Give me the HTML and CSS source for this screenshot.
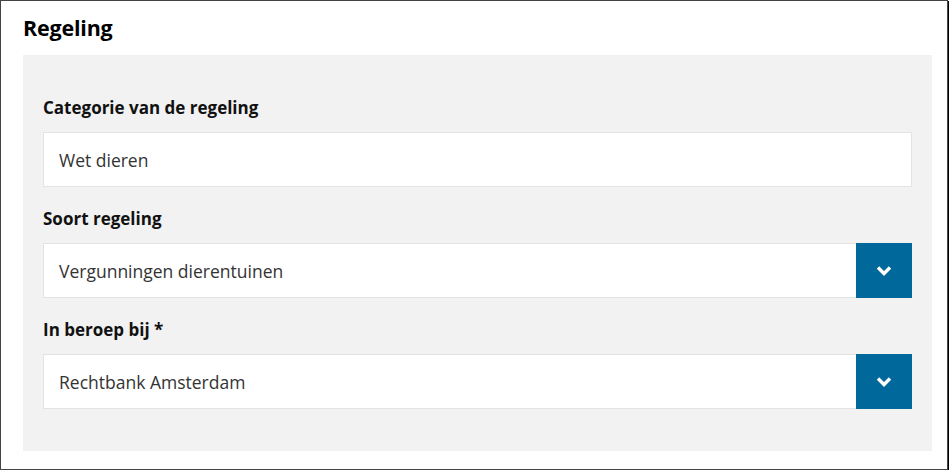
FILE: index.html
```html
<!DOCTYPE html>
<html lang="nl">
<head>
  <meta charset="UTF-8" />
  <title>Regeling</title>
  <link rel="stylesheet" href="styles.css">
</head>
<body>
  <div class="frame">
    <h2 class="title">Regeling</h2>
    <div class="panel">
      <div class="field">
        <label class="label">Categorie van de regeling</label>
        <div class="input">Wet dieren</div>
      </div>
      <div class="field">
        <label class="label">Soort regeling</label>
        <div class="select">
          <span class="value">Vergunningen dierentuinen</span>
          <span class="toggle">
            <svg width="16" height="11" viewBox="0 0 16 11"><path d="M2 2.5l6 6 6-6" fill="none" stroke="#fff" stroke-width="3.4"/></svg>
          </span>
        </div>
      </div>
      <div class="field">
        <label class="label">In beroep bij *</label>
        <div class="select">
          <span class="value">Rechtbank Amsterdam</span>
          <span class="toggle">
            <svg width="16" height="11" viewBox="0 0 16 11"><path d="M2 2.5l6 6 6-6" fill="none" stroke="#fff" stroke-width="3.4"/></svg>
          </span>
        </div>
      </div>
    </div>
  </div>
</body>
</html>
```

FILE: styles.css
```css
body {
  margin: 0;
  background: #fff;
  font-family: 'Open Sans', sans-serif;
  color: #000;
}
.frame {
  box-sizing: border-box;
  width: 948px;
  height: 470px;
  border: 1px solid #444;
  box-shadow: 1px 1px 0 #000;
  padding: 0 15px 0 22px;
}
.title {
  font-size: 21.5px;
  font-weight: bold;
  margin: 0;
  padding: 12px 0 0 0;
  height: 42px;
  line-height: 30px;
  letter-spacing: -0.2px;
}
.panel {
  background: #f2f2f2;
  width: 909px;
  box-sizing: border-box;
  padding: 41px 20px 42px 20px;
}
.field + .field {
  margin-top: 20px;
}
.label {
  display: block;
  font-size: 17px;
  font-weight: bold;
  line-height: 24px;
  margin-bottom: 12px;
  color: #111;
}
.input, .select {
  box-sizing: border-box;
  height: 55px;
  background: #fff;
  border: 1px solid #e3e3e3;
  display: flex;
  align-items: center;
  font-size: 17.5px;
  color: #333;
}
.input {
  padding: 0 15px;
}
.select .value {
  flex: 1;
  padding: 0 15px;
}
.toggle {
  width: 56px;
  height: 55px;
  margin: -1px -1px -1px 0;
  background: #01689b;
  display: flex;
  align-items: center;
  justify-content: center;
}
```
